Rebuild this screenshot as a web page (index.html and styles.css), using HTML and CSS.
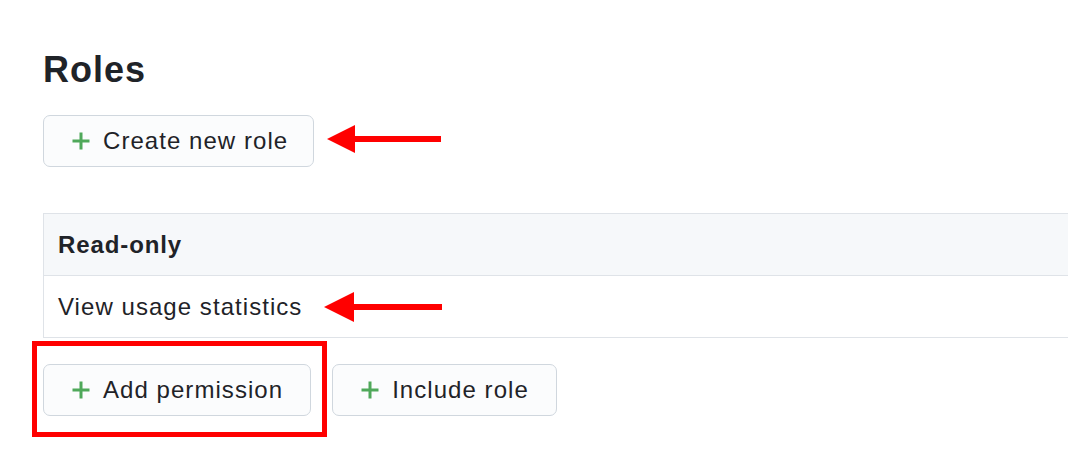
FILE: index.html
```html
<!DOCTYPE html>
<html lang="en">
<head>
<meta charset="utf-8">
<title>Roles</title>
<link rel="stylesheet" href="styles.css">
</head>
<body>
<div class="page">
  <h1 class="title">Roles</h1>
  <div class="actions">
    <button class="btn btn-create" type="button">
      <svg class="plus" viewBox="0 0 20 20" width="20" height="20" aria-hidden="true"><path d="M10 1.5v17M1.5 10h17" stroke="currentColor" stroke-width="3" fill="none"/></svg>
      <span>Create new role</span>
    </button>
  </div>

  <div class="table">
    <div class="table-head">Read-only</div>
    <div class="table-row">View usage statistics</div>
  </div>

  <div class="actions bottom">
    <button class="btn" type="button">
      <svg class="plus" viewBox="0 0 20 20" width="20" height="20" aria-hidden="true"><path d="M10 1.5v17M1.5 10h17" stroke="currentColor" stroke-width="3" fill="none"/></svg>
      <span>Add permission</span>
    </button>
    <button class="btn" type="button">
      <svg class="plus" viewBox="0 0 20 20" width="20" height="20" aria-hidden="true"><path d="M10 1.5v17M1.5 10h17" stroke="currentColor" stroke-width="3" fill="none"/></svg>
      <span>Include role</span>
    </button>
  </div>

  <div class="highlight"></div>
  <svg class="arrow arrow-top" width="120" height="32" viewBox="0 0 120 32" aria-hidden="true">
    <path d="M28 13h86v6H28z" fill="#ff0000"/>
    <path d="M0 16L28 2v28z" fill="#ff0000"/>
  </svg>
  <svg class="arrow arrow-mid" width="120" height="32" viewBox="0 0 120 32" aria-hidden="true">
    <path d="M28 13h90v6H28z" fill="#ff0000"/>
    <path d="M0 16L30 1v30z" fill="#ff0000"/>
  </svg>
</div>
</body>
</html>
```
FILE: styles.css
```css
html, body {
  margin: 0;
  padding: 0;
  background: #ffffff;
  overflow: hidden;
}

body {
  font-family: "Liberation Sans", Arial, sans-serif;
  color: #1f2328;
}

.page {
  position: relative;
  padding: 48px 0 0 43px;
  height: 476px;
  box-sizing: border-box;
}

.title {
  margin: 0;
  font-size: 36px;
  line-height: 44px;
  font-weight: 700;
  letter-spacing: 1px;
}

.actions {
  display: flex;
  gap: 21px;
  margin-top: 23px;
}

.actions.bottom {
  margin-top: 26px;
}

.btn {
  display: inline-flex;
  align-items: center;
  gap: 12px;
  height: 52px;
  box-sizing: border-box;
  padding: 0 27px 0 27px;
  border: 1px solid #d0d7de;
  border-radius: 7px;
  background: #fbfcfd;
  font-family: inherit;
  font-size: 24px;
  letter-spacing: 1.05px;
  color: #1f2328;
  cursor: pointer;
}

.btn-create {
  padding-right: 25px;
}

.plus {
  color: #4fa85a;
  flex: none;
}

.table {
  margin-top: 46px;
  border: 1px solid #dfe3e8;
  border-right: none;
  width: 1025px;
  box-sizing: border-box;
}

.table-head {
  height: 61px;
  display: flex;
  align-items: center;
  padding-left: 14px;
  background: #f6f8fa;
  border-bottom: 1px solid #dfe3e8;
  font-size: 24px;
  font-weight: 700;
  letter-spacing: 0.9px;
}

.table-row {
  height: 61px;
  display: flex;
  align-items: center;
  padding-left: 14px;
  font-size: 24px;
  letter-spacing: 1.05px;
}

.highlight {
  position: absolute;
  left: 32px;
  top: 341px;
  width: 295px;
  height: 96px;
  border: 5px solid #ff0000;
  box-sizing: border-box;
}

.arrow {
  position: absolute;
}

.arrow-top {
  left: 327px;
  top: 123px;
}

.arrow-mid {
  left: 324px;
  top: 291px;
}
```
